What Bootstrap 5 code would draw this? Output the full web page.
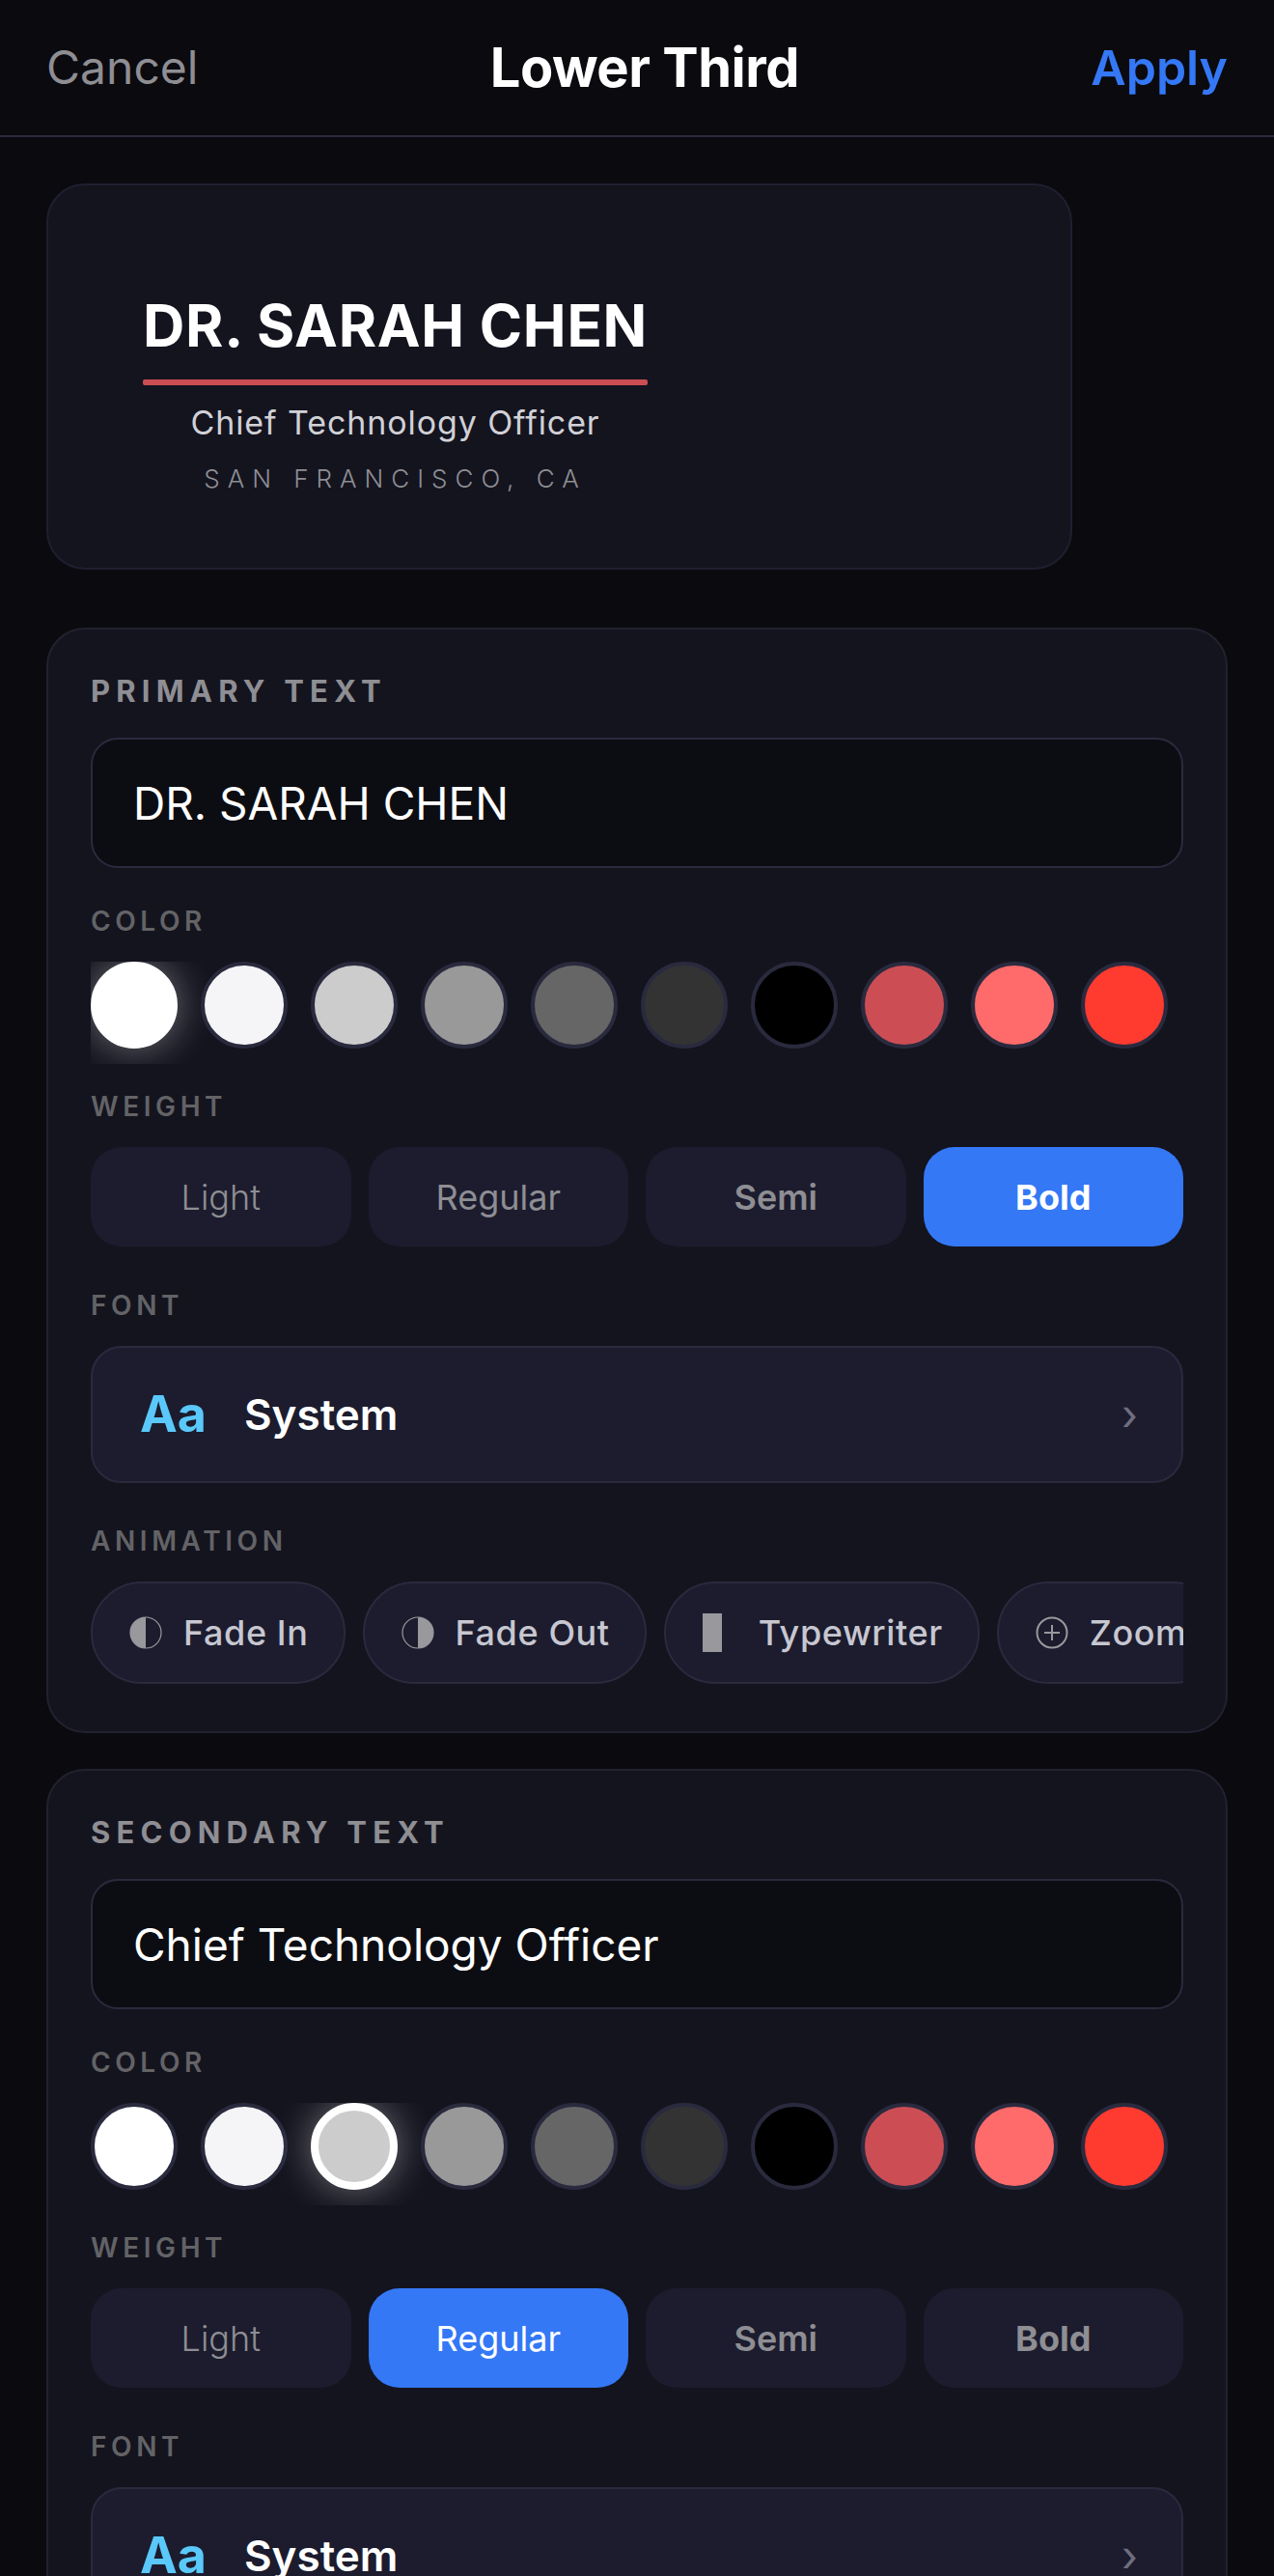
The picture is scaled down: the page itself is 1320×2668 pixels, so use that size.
<!DOCTYPE html>
<html lang="en">
<head>
<meta charset="utf-8">
<title>Lower Third</title>
<link href="https://cdn.jsdelivr.net/npm/bootstrap@5.3.0/dist/css/bootstrap.min.css" rel="stylesheet">
<style>
html,body{height:2668px;overflow:hidden;background:#0a0a0f;font-family:Inter,"Liberation Sans",sans-serif;}
.app-frame{height:2668px;overflow:hidden;background:#0a0a0f;color:#fff;}
.top-bar{height:142px;padding:0 48px;border-bottom:2px solid #2a2a3e;}
.top-cancel{font-size:48px;color:#8e8e93;line-height:1;}
.top-title{font-size:56px;font-weight:700;letter-spacing:-.5px;color:#fff;line-height:1;}
.top-apply{font-size:50px;font-weight:600;color:#3478f6;line-height:1;}
.scroll-body{padding:48px 48px 0;}
.preview-box{width:1063px;height:400px;margin-bottom:60px;padding:39px 0 0 98px;background:#14141f;border:2px solid #1f1f30;border-radius:40px;}
.preview-name{font-size:60px;font-weight:700;line-height:72px;letter-spacing:.72px;color:#fff;}
.preview-rule{width:100%;height:6px;margin:20px 0 11px;background:#cc4e54;border-radius:2px;}
.preview-role{font-size:34px;line-height:56px;letter-spacing:.9px;color:#d1d1d6;}
.preview-loc{font-size:26px;font-weight:300;line-height:44px;letter-spacing:8px;margin-top:8px;color:#8e8e93;}
.edit-card{background:#14141f;border:2px solid #22222f;border-radius:40px;padding:44px 44px 49px;margin-bottom:37px;}
.edit-title{font-size:31px;font-weight:700;line-height:40px;letter-spacing:6.2px;color:#8e8e93;margin-bottom:28px;}
.edit-label{font-size:28px;font-weight:600;line-height:32px;letter-spacing:4.6px;color:#636366;margin-bottom:26px;}
.edit-input.form-control{height:135px;padding:0 42px;margin-bottom:39px;font-size:46px;color:#fff;background:#0c0d12;border:2px solid #2a2a3e;border-radius:28px;box-shadow:none;}
.swatch-row{display:flex;gap:24px;overflow:hidden;padding-bottom:16px;margin-bottom:28px;}
.swatch-dot{flex:0 0 90px;height:90px;border-radius:50%;border:4px solid #2a2a3e;}
.swatch-on{border:8px solid #fff;box-shadow:0 0 40px rgba(255,255,255,.4);}
.sw-white{background:#fff}.sw-snow{background:#f5f5f7}.sw-g1{background:#ccc}.sw-g2{background:#999}.sw-g3{background:#666}.sw-g4{background:#333}.sw-black{background:#000}.sw-rose{background:#cc4e54}.sw-coral{background:#ff6b6b}.sw-red{background:#ff3b30}
.weight-row{gap:18px;margin-bottom:45px;}
.weight-btn.btn{flex:1 1 0;height:103px;padding:0;font-size:36px;color:#8e8e93;background:#1c1c2e;border:0;border-radius:32px;}
.weight-btn.weight-on{background:#3478f6;color:#fff;}
.w-light{font-weight:300}.w-reg{font-weight:400}.w-semi{font-weight:600}.w-bold{font-weight:700}
.font-row{height:142px;padding:0 45px 0 49px;margin-bottom:44px;background:#1c1c2e;border:2px solid #2a2a3e;border-radius:32px;}
.font-aa{font-size:52px;font-weight:700;line-height:1;color:#5ac8fa;width:108px;}
.font-name{font-size:44px;font-weight:600;line-height:1;color:#fff;}
.font-more{font-size:44px;line-height:1;color:#6e6e80;}
.anim-row{display:flex;gap:18px;overflow:hidden;}
.anim-pill{flex:0 0 auto;height:106px;padding:0 36px 0 38px;gap:22px;background:#1c1c2e;border:2px solid #2a2a3e;border-radius:53px;font-size:36px;font-weight:500;letter-spacing:.6px;color:#c7c7d1;}
.anim-ico{width:34px;height:34px;flex:0 0 auto;}
.anim-bar{width:20px;height:40px;background:#98989d;margin-right:16px;}
</style>
</head>
<body>
<div class="app-frame">
  <header class="top-bar d-flex justify-content-between align-items-center">
    <span class="top-cancel">Cancel</span>
    <span class="top-title">Lower Third</span>
    <span class="top-apply">Apply</span>
  </header>
  <main class="scroll-body">
    <div class="preview-box d-flex align-items-center">
      <div class="d-inline-flex flex-column align-items-center">
        <div class="preview-name">DR. SARAH CHEN</div>
        <div class="preview-rule"></div>
        <div class="preview-role">Chief Technology Officer</div>
        <div class="preview-loc">SAN FRANCISCO, CA</div>
      </div>
    </div>

    <section class="edit-card">
      <div class="edit-title">PRIMARY TEXT</div>
      <input class="form-control edit-input" type="text" value="DR. SARAH CHEN">
      <div class="edit-label">COLOR</div>
      <div class="swatch-row">
        <div class="swatch-dot sw-white swatch-on"></div><div class="swatch-dot sw-snow"></div><div class="swatch-dot sw-g1"></div><div class="swatch-dot sw-g2"></div><div class="swatch-dot sw-g3"></div><div class="swatch-dot sw-g4"></div><div class="swatch-dot sw-black"></div><div class="swatch-dot sw-rose"></div><div class="swatch-dot sw-coral"></div><div class="swatch-dot sw-red"></div>
      </div>
      <div class="edit-label">WEIGHT</div>
      <div class="weight-row d-flex">
        <button class="btn weight-btn w-light">Light</button>
        <button class="btn weight-btn w-reg">Regular</button>
        <button class="btn weight-btn w-semi">Semi</button>
        <button class="btn weight-btn w-bold weight-on">Bold</button>
      </div>
      <div class="edit-label">FONT</div>
      <div class="font-row d-flex align-items-center">
        <span class="font-aa">Aa</span><span class="font-name flex-grow-1">System</span><span class="font-more">›</span>
      </div>
      <div class="edit-label">ANIMATION</div>
      <div class="anim-row">
        <div class="anim-pill d-flex align-items-center"><svg class="anim-ico" viewBox="0 0 34 34"><circle cx="17" cy="17" r="16" fill="none" stroke="#98989d" stroke-width="1.2"/><path d="M17 1a16 16 0 0 0 0 32z" fill="#98989d"/></svg><span>Fade In</span></div>
        <div class="anim-pill d-flex align-items-center"><svg class="anim-ico" viewBox="0 0 34 34"><circle cx="17" cy="17" r="16" fill="none" stroke="#98989d" stroke-width="1.2"/><path d="M17 1a16 16 0 0 1 0 32z" fill="#98989d"/></svg><span>Fade Out</span></div>
        <div class="anim-pill d-flex align-items-center"><div class="anim-bar"></div><span>Typewriter</span></div>
        <div class="anim-pill d-flex align-items-center"><svg class="anim-ico" viewBox="0 0 34 34"><circle cx="17" cy="17" r="15.5" fill="none" stroke="#98989d" stroke-width="2"/><path d="M17 9v16M9 17h16" fill="none" stroke="#98989d" stroke-width="2"/></svg><span>Zoom</span></div>
      </div>
    </section>

    <section class="edit-card">
      <div class="edit-title">SECONDARY TEXT</div>
      <input class="form-control edit-input" type="text" value="Chief Technology Officer">
      <div class="edit-label">COLOR</div>
      <div class="swatch-row">
        <div class="swatch-dot sw-white"></div><div class="swatch-dot sw-snow"></div><div class="swatch-dot sw-g1 swatch-on"></div><div class="swatch-dot sw-g2"></div><div class="swatch-dot sw-g3"></div><div class="swatch-dot sw-g4"></div><div class="swatch-dot sw-black"></div><div class="swatch-dot sw-rose"></div><div class="swatch-dot sw-coral"></div><div class="swatch-dot sw-red"></div>
      </div>
      <div class="edit-label">WEIGHT</div>
      <div class="weight-row d-flex">
        <button class="btn weight-btn w-light">Light</button>
        <button class="btn weight-btn w-reg weight-on">Regular</button>
        <button class="btn weight-btn w-semi">Semi</button>
        <button class="btn weight-btn w-bold">Bold</button>
      </div>
      <div class="edit-label">FONT</div>
      <div class="font-row d-flex align-items-center">
        <span class="font-aa">Aa</span><span class="font-name flex-grow-1">System</span><span class="font-more">›</span>
      </div>
    </section>
  </main>
</div>
<script src="https://cdn.jsdelivr.net/npm/bootstrap@5.3.0/dist/js/bootstrap.bundle.min.js"></script>
</body>
</html>
